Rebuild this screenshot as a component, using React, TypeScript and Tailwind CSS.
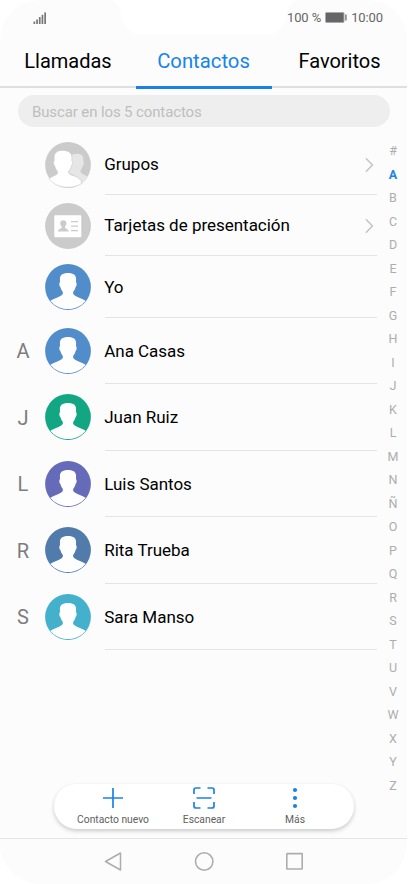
import React from 'react';
import clsx from 'clsx';

const contacts = [
  { letter: 'A', name: 'Ana Casas', color: 'text-[#518dcb]' },
  { letter: 'J', name: 'Juan Ruiz', color: 'text-[#13a683]' },
  { letter: 'L', name: 'Luis Santos', color: 'text-[#656bb8]' },
  { letter: 'R', name: 'Rita Trueba', color: 'text-[#507bab]' },
  { letter: 'S', name: 'Sara Manso', color: 'text-[#43b0cc]' },
];

const alphabet = '#ABCDEFGHIJKLMNÑOPQRSTUVWXYZ'.split('');

const PERSON =
  'M23 8.9C17.3 8.9 14.9 11 14.9 15L15 18.2C14 18.6 14.2 22.4 15.3 22.8C15.8 25 16.8 26.8 17.9 27.9C17.9 29.6 17.5 30.6 16.6 31.2C13.5 33.2 9 34.4 5.4 36.8C9.2 41.8 15.7 45.1 23 45.1S36.8 41.8 40.6 36.8C37 34.4 32.5 33.2 29.4 31.2C28.5 30.6 28.1 29.6 28.1 27.9C29.2 26.8 30.2 25 30.7 22.8C31.8 22.4 32 18.6 31 18.2L31.1 15C31.1 11 28.7 8.9 23 8.9Z';

const Avatar = ({ color }: { color: string }) => (
  <svg viewBox="0 0 46 46" className={clsx('h-[46px] w-[46px]', color)}>
    <circle cx="23" cy="23" r="22.9" fill="currentColor" />
    <path d={PERSON} fill="#fff" />
  </svg>
);

const GroupAvatar = () => (
  <svg viewBox="0 0 46 46" className="h-[46px] w-[46px]">
    <circle cx="23" cy="23" r="22.9" fill="#cbcbcb" />
    <path
      d="M27 13C29 11.2 37.6 10.6 38.2 15.5L38.3 19.3C39.4 19.8 39 23 37.9 23.5C37.3 26 36.6 27.2 35.6 28.2V30C36.6 32.2 40 32.7 43 34.6C41.5 37.6 39.5 39.8 37 41.5L30 34L24 31Z"
      fill="#e6e6e6"
    />
    <path
      d="M18 8.4C12 8.2 9.1 11 9.2 15.6L9.3 18.8C8.2 19.3 8.5 23.3 9.7 23.8C10.2 26.4 11.3 28.2 12.6 29.4C12.6 31.6 12.2 32.3 10.8 33C8.5 34.2 5.9 35.2 3.9 36.5C7.6 42 14.7 45.3 23 45.3C28.8 45.3 33.4 43.8 36.8 41.2C36.5 38 34 35.8 30 34.2C26.5 32.8 23.4 32.4 23.4 29.4C24.9 28.2 25.9 26.4 26.4 23.8C27.7 23.3 27.9 19.3 26.8 18.8L26.9 15.6C27 11 24 8.6 18 8.4Z"
      fill="#fff"
      stroke="#cbcbcb"
      strokeWidth="0.6"
    />
  </svg>
);

const CardAvatar = () => (
  <svg viewBox="0 0 46 46" className="h-[46px] w-[46px]">
    <circle cx="23" cy="23" r="22.9" fill="#cbcbcb" />
    <rect x="9.3" y="12.2" width="27" height="22" rx="0.8" fill="#fff" />
    <path
      d="M18.3 17.2C16.2 17.2 15.1 18.4 15.2 20.3C15.3 22 15.9 23 16.7 23.7V24.8C16 25.7 13 26 13 28.4H23.6C23.6 26 20.6 25.7 19.9 24.8V23.7C20.7 23 21.3 22 21.4 20.3C21.5 18.4 20.4 17.2 18.3 17.2Z"
      fill="#cbcbcb"
    />
    <path d="M26 18.6H33M26 23.1H33M26 27.6H33" stroke="#cbcbcb" strokeWidth="1.4" />
  </svg>
);

const Chevron = () => (
  <svg viewBox="0 0 10 16" className="mr-[3px] mb-px h-4 w-[10px]" fill="none" stroke="#c4c4c4" strokeWidth="1.5">
    <path d="M1.9 1.3L8.4 8L1.9 14.7" />
  </svg>
);

interface RowProps {
  letter?: string;
  name: string;
  avatar: React.ReactNode;
  chevron?: boolean;
  height: string;
}

const Row = ({ letter, name, avatar, chevron, height }: RowProps) => (
  <div className={clsx('flex items-center', height)}>
    <span className="w-[45px] pt-px pl-px text-center text-[20px] text-[#7d7d7d]">{letter}</span>
    {avatar}
    <div className="ml-[14px] flex h-full flex-1 items-center justify-between border-b border-[#e4e4e4] pt-0.5">
      <span className="-ml-[0.8px] text-[17px] tracking-[-0.02px] text-black">{name}</span>
      {chevron && <Chevron />}
    </div>
  </div>
);

export default function App() {
  return (
    <div className="h-[884px] w-[408px] overflow-hidden bg-white font-[Roboto,sans-serif]">
      <div className="relative flex h-full w-[407px] flex-col overflow-hidden rounded-[40px] bg-[#fcfcfc]">
        {/* Notch */}
        <svg viewBox="0 0 190 34" className="absolute top-0 left-[109px] h-[34px] w-[190px]">
          <path d="M0 0C6 1 11 5 12 12C13 25 20 34 33 34H157C170 34 177 25 178 12C179 5 184 1 190 0Z" fill="#fff" />
        </svg>

        {/* Status bar */}
        <div className="relative flex h-[34px] items-center justify-between pt-px pr-6 pl-[33px] text-[13px] text-[#666]">
          <svg viewBox="0 0 14 12" className="h-3 w-[14px]" fill="#777">
            <rect x="0.5" y="9.5" width="1.7" height="2.5" />
            <rect x="3.2" y="7.5" width="1.7" height="4.5" />
            <rect x="5.9" y="5" width="1.7" height="7" />
            <rect x="8.6" y="2.8" width="1.7" height="9.2" />
            <rect x="11.3" y="0.5" width="1.7" height="11.5" />
          </svg>
          <div className="flex items-center gap-1">
            <span className="tracking-[-0.1px]">100 %</span>
            <svg viewBox="0 0 22 11" className="h-[11px] w-[22px]">
              <rect x="0.5" y="0.5" width="18.5" height="10" rx="1" fill="#666" stroke="#aaa" />
              <rect x="20.2" y="2.5" width="1.4" height="6" fill="#777" />
            </svg>
            <span className="tracking-[-0.1px]">10:00</span>
          </div>
        </div>

        {/* Tabs */}
        <div className="flex h-[55px] text-center text-[20px] leading-[54px] text-black">
          <div className="h-[54px] w-[136px] border-b-2 border-[#dfdfdf]">Llamadas</div>
          <div className="w-[136px] border-b-[3px] border-[#1a82e6] pr-px text-[20.3px] text-[#1784ee]">Contactos</div>
          <div className="h-[54px] w-[135px] border-b-2 border-[#dfdfdf]">Favoritos</div>
        </div>

        {/* Search */}
        <div className="mt-1.5 ml-[18px] flex h-8 w-[372px] items-center rounded-full bg-[#eee] pt-0.5 pl-[14px] text-[15px] tracking-[-0.12px] text-[#bebebe]">
          Buscar en los 5 contactos
        </div>

        <div className="flex h-[657px]">
          <div className="w-[377px] shrink-0 pt-[7px]">
            <Row name="Grupos" avatar={<GroupAvatar />} chevron height="h-[61px]" />
            <Row name="Tarjetas de presentación" avatar={<CardAvatar />} chevron height="h-[61px]" />
            <Row name="Yo" avatar={<Avatar color="text-[#518dcb]" />} height="h-[61.5px]" />
            {contacts.map((c) => (
              <Row key={c.letter} letter={c.letter} name={c.name} avatar={<Avatar color={c.color} />} height="h-[66.5px]" />
            ))}
          </div>
          {/* Alphabet index */}
          <div className="flex w-8 shrink-0 flex-col items-center pt-3 text-[12.5px] text-[#adadad]">
            {alphabet.map((l) => (
              <span
                key={l}
                className={clsx('h-[23.52px] shrink-0 leading-[23.52px]', l === 'A' && 'font-bold text-[#1784ee]')}
              >
                {l}
              </span>
            ))}
          </div>
        </div>

        {/* Actions */}
        <div className="mx-auto flex h-[45px] w-[300px] shrink-0 rounded-full bg-white pl-[14px] text-[10.3px] leading-[17px] text-[#606060] shadow-[0_2px_4px_rgba(0,0,0,0.2)]">
          <div className="flex w-[91px] flex-col items-center pt-[3px]">
            <svg viewBox="0 0 22 22" className="h-[22px] w-[22px]" stroke="#1a82e6" strokeWidth="1.7">
              <path d="M11 1V21M1 11H21" />
            </svg>
            <span className="mt-0.5 whitespace-nowrap">Contacto nuevo</span>
          </div>
          <div className="flex w-[91px] flex-col items-center pt-[3px]">
            <svg viewBox="0 0 22 22" className="h-[22px] w-[22px]" fill="none" stroke="#1a82e6" strokeWidth="1.7">
              <path d="M1 7V3Q1 1 3 1H7.5M14.5 1H19Q21 1 21 3V7M21 15V19Q21 21 19 21H14.5M7.5 21H3Q1 21 1 19V15M3.5 11H18.5" />
            </svg>
            <span className="mt-0.5">Escanear</span>
          </div>
          <div className="flex w-[91px] flex-col items-center pt-[3px]">
            <svg viewBox="0 0 22 22" className="h-[22px] w-[22px]" fill="#1a82e6">
              <circle cx="11" cy="3" r="2.1" />
              <circle cx="11" cy="11" r="2.1" />
              <circle cx="11" cy="19" r="2.1" />
            </svg>
            <span className="mt-0.5">Más</span>
          </div>
        </div>

        {/* Navigation bar */}
        <div className="mt-auto flex h-[46px] items-center justify-center gap-[71px] border-t border-[#e4e4e4]">
          <svg viewBox="0 0 20 20" className="h-5 w-5" fill="none" stroke="#adadad" strokeWidth="1.5" strokeLinejoin="round">
            <path d="M17.5 1V18L2.5 9.5Z" />
          </svg>
          <svg viewBox="0 0 20 20" className="h-5 w-5" fill="none" stroke="#adadad" strokeWidth="1.6">
            <circle cx="10.2" cy="9.5" r="8.7" />
          </svg>
          <svg viewBox="0 0 20 20" className="h-5 w-5" fill="none" stroke="#adadad" strokeWidth="1.6">
            <rect x="1.8" y="1.6" width="15.4" height="15.4" rx="0.4" />
          </svg>
        </div>
      </div>
    </div>
  );
}
